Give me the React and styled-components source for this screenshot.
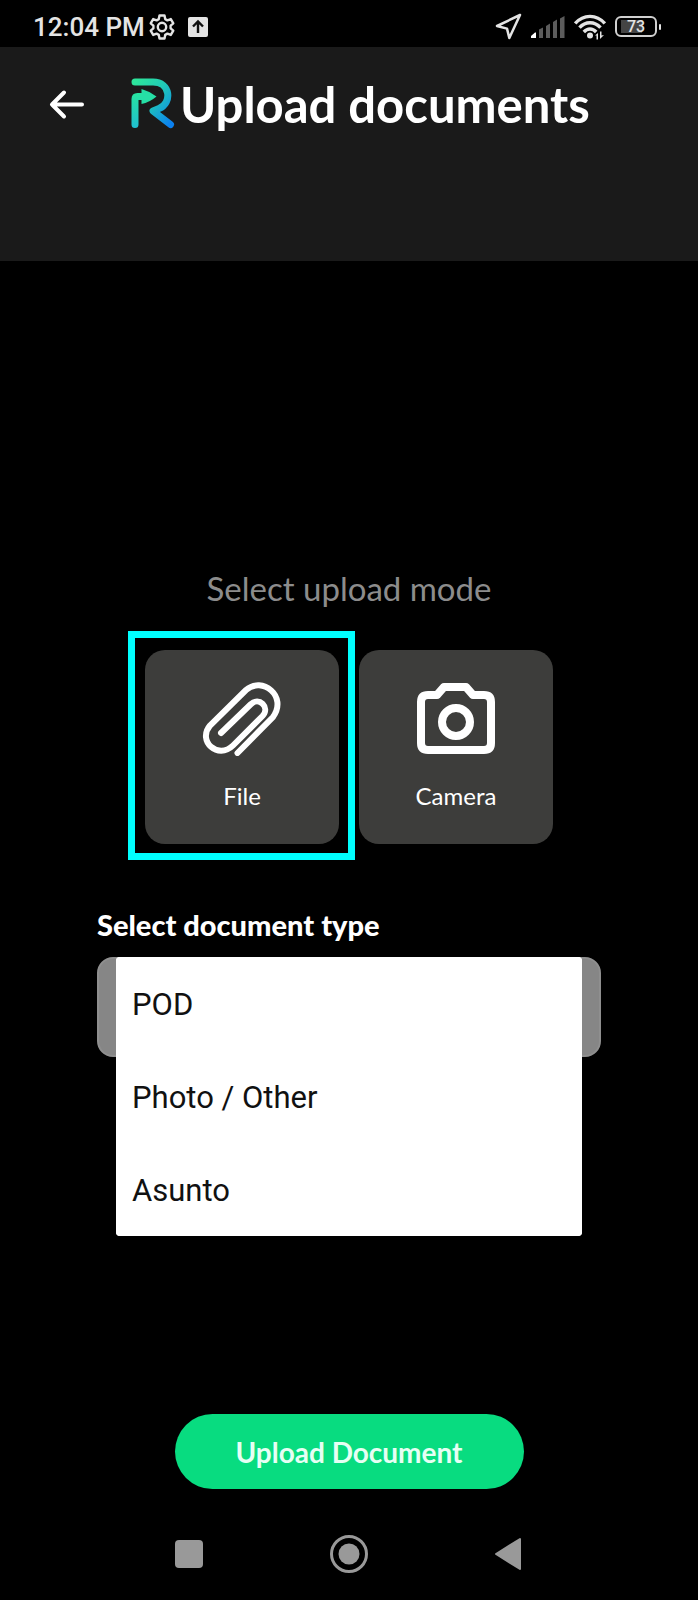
import React, { useState } from 'react'
import styled, { createGlobalStyle } from 'styled-components'

const GlobalStyle = createGlobalStyle`
  * {
    box-sizing: border-box;
  }

  body {
    background: #000;
    margin: 0;
  }

  button,
  select {
    border: 0;
    cursor: pointer;
    font: inherit;
    margin: 0;
    padding: 0;
  }
`

const Screen = styled.div`
  background: #000;
  color: #fff;
  display: flex;
  flex-direction: column;
  font-family: Lato, 'Open Sans', sans-serif;
  min-height: 100vh;
`

const StatusBar = styled.div`
  align-items: center;
  color: #e4e4e4;
  display: flex;
  font-family: Roboto, sans-serif;
  font-size: 26px;
  font-weight: 500;
  height: 47px;
  justify-content: space-between;
  line-height: 32px;
  padding: 6px 37px 0 33px;
`

const StatusGroup = styled.div`
  align-items: center;
  display: flex;
  gap: ${({ gap }) => gap}px;
`

const Header = styled.header`
  align-items: flex-start;
  background: #1a1a1a;
  display: flex;
  height: 214px;
  padding: 28px 48px 0;
`

const BackButton = styled.button`
  background: none;
  height: 60px;
  margin-right: 45px;
  width: 38px;
`

const Title = styled.h1`
  align-items: center;
  display: flex;
  font-size: 49px;
  font-weight: 700;
  gap: 5px;
  line-height: 58px;
  margin: 0;
  white-space: nowrap;
`

const Main = styled.main`
  display: flex;
  flex: 1;
  flex-direction: column;
  padding: 307px 97px 0;
`

const Hint = styled.p`
  color: #8c8c8c;
  font-size: 33px;
  line-height: 40px;
  margin: 0;
  text-align: center;
`

const Modes = styled.div`
  display: flex;
  gap: 20px;
  justify-content: center;
  margin-top: 42px;
`

const ModeButton = styled.button`
  align-items: center;
  background: #3d3d3b;
  border-radius: 20px;
  color: #fff;
  display: flex;
  flex-direction: column;
  font-size: 24px;
  gap: 24px;
  height: 194px;
  line-height: 32px;
  padding-top: 30px;
  position: relative;
  width: 194px;
`

const Highlight = styled.span`
  border: 7px solid #00ffff;
  inset: -19px -16px -16px -17px;
  pointer-events: none;
  position: absolute;
`

const Label = styled.label`
  font-size: 29px;
  font-weight: 900;
  line-height: 32px;
  margin-top: 65px;
`

const SelectField = styled.div`
  margin-top: 16px;
  position: relative;
`

const Select = styled.select`
  appearance: none;
  background: #868686;
  border: 2px solid #8f8f8f;
  border-radius: 16px;
  color: #868686;
  display: block;
  height: 100px;
  padding: 0 36px;
  width: 100%;
`

const Menu = styled.div`
  background: #fff;
  border-radius: 4px;
  left: 19px;
  overflow: hidden;
  position: absolute;
  right: 19px;
  top: 0;
`

const MenuItem = styled.button`
  background: #fff;
  color: #111;
  display: block;
  font-family: Roboto, sans-serif;
  font-size: 31px;
  height: 93px;
  line-height: 36px;
  padding: 3px 16px 0;
  text-align: left;
  width: 100%;
`

const Footer = styled.footer`
  display: flex;
  flex-direction: column;
`

const SubmitButton = styled.button`
  align-self: center;
  background: #08dc80;
  border-radius: 38px;
  color: #e6fff4;
  font-size: 28px;
  font-weight: 700;
  height: 75px;
  line-height: 32px;
  width: 50%;
`

const NavBar = styled.nav`
  display: grid;
  grid-template-columns: repeat(3, 160px);
  height: 111px;
  justify-content: center;
  padding-bottom: 26px;
  padding-top: 45px;
`

const NavButton = styled.button`
  align-items: center;
  background: none;
  display: flex;
  justify-content: center;
`

const GearIcon = () => (
  <svg width="26" height="26" viewBox="0 0 26 26" fill="none" stroke="#e4e4e4" strokeWidth="2.4" strokeLinejoin="round">
    <path d="M10.5 1.5h5l.7 3.6 2.2 1.3 3.4-1.3 2.5 4.3-2.7 2.3v2.6l2.7 2.3-2.5 4.3-3.4-1.3-2.2 1.3-.7 3.6h-5l-.7-3.6-2.2-1.3-3.4 1.3-2.5-4.3 2.7-2.3v-2.6L1.7 9.4l2.5-4.3 3.4 1.3 2.2-1.3z" />
    <circle cx="13" cy="13" r="4.2" />
  </svg>
)

const UploadBadge = () => (
  <svg width="20" height="20" viewBox="0 0 20 20">
    <rect width="20" height="20" rx="2" fill="#e4e4e4" />
    <path d="M10 16V5M5 9.5l5-5 5 5" fill="none" stroke="#111" strokeWidth="2.4" />
  </svg>
)

const LocationIcon = () => (
  <svg width="27" height="27" viewBox="0 0 27 27" fill="none" stroke="#e4e4e4" strokeWidth="2.5" strokeLinejoin="round">
    <path d="M25 2 2 13l10 2.6L14.3 25z" />
  </svg>
)

const SignalIcon = () => (
  <svg width="34" height="22" viewBox="0 0 34 22">
    <path d="M0 22v-2l4-3.5h1V22z" fill="#fff" />
    <path d="M8 13.5l4-2V22H8zM15 10l4-2.5V22h-4zM22 6l4-2.5V22h-4zM29 2.5 33.5 0v22H29z" fill="#5c5c5c" />
  </svg>
)

const WifiIcon = () => (
  <svg width="32" height="26" viewBox="0 0 32 26">
    <g fill="none" stroke="#e4e4e4" strokeWidth="3.4">
      <path d="M1.2 9.5C9.5 0 22.5 0 30.8 9.5" />
      <path d="M5.5 13.7c6-6.6 15-6.6 21 0" />
      <path d="M9.8 18c3.8-4 8.6-4 12.4 0" />
    </g>
    <circle cx="16" cy="21.5" r="3" fill="#e4e4e4" />
    <path d="M21 21.5l3-2.500v6.500h-1.500v-4zM26 17.500h1.500v4l2.500-.5-4 4z" fill="#e4e4e4" />
  </svg>
)

const Battery = styled.span`
  align-items: center;
  display: flex;
  gap: 2px;

  &::after {
    background: #e4e4e4;
    border-radius: 1px;
    content: '';
    height: 6px;
    width: 2px;
  }
`

const BatteryLevel = styled.span`
  background: linear-gradient(90deg, #444 70%, #000 70%) content-box;
  border: 2px solid #d0d0d0;
  border-radius: 6px;
  font-size: 16px;
  height: 21px;
  line-height: 13px;
  padding: 2px 4px;
  text-align: center;
  width: 42px;
`

const BackIcon = () => (
  <svg width="38" height="60" viewBox="0 0 38 60" fill="none" stroke="#fff" strokeWidth="4" strokeLinecap="round" strokeLinejoin="round">
    <path d="M34 29.500H4M16 17.500 4 29.500l12 12" />
  </svg>
)

const Logo = () => (
  <svg width="44" height="52" viewBox="0 0 44 52">
    <defs>
      <linearGradient id="logo-leg" x1="0" y1="0" x2="1" y2="1">
        <stop offset="0" stopColor="#2de59b" />
        <stop offset="0.45" stopColor="#20c9b8" />
        <stop offset="1" stopColor="#0b80f0" />
      </linearGradient>
      <linearGradient id="logo-stem" x1="0" y1="16" x2="0" y2="50" gradientUnits="userSpaceOnUse">
        <stop offset="0" stopColor="#27e3a1" />
        <stop offset="1" stopColor="#20bfd0" />
      </linearGradient>
    </defs>
    <path
      d="M4 4H22C39.500 4 41.500 25 28 30.500L22 33 39.500 46.500"
      fill="none"
      stroke="url(#logo-leg)"
      strokeWidth="7"
      strokeLinecap="round"
      strokeLinejoin="round"
    />
    <path d="M4 46.500V21q0-2.500 2.500-2.500H13" fill="none" stroke="url(#logo-stem)" strokeWidth="7" strokeLinecap="round" />
    <path d="M10.500 11Q18 13 25.500 18.500q-7 6-15 7.500z" fill="#26dfa5" />
  </svg>
)

const ClipIcon = () => (
  <svg width="80" height="76" viewBox="0 0 80 76" fill="none" stroke="#fff" strokeWidth="6" strokeLinecap="round">
    <path d="M19 53 48.500 24.500c8.500-8.500 20 3 12 11.500L31 65.500C16 80-5 61 8 45.500L44 10C60-4 86 16 71 37L35.500 73" />
  </svg>
)

const CameraIcon = () => (
  <svg width="80" height="76" viewBox="0 0 80 76" fill="none" stroke="#fff" strokeWidth="8" strokeLinejoin="round">
    <path d="M28 7h22l7 8h11q7 0 7 7v41q0 7-7 7H12q-7 0-7-7V22q0-7 7-7h9z" />
    <circle cx="40" cy="42" r="14" />
  </svg>
)

const modes = [
  { id: 'file', label: 'File', icon: <ClipIcon /> },
  { id: 'camera', label: 'Camera', icon: <CameraIcon /> },
]

const documentTypes = ['POD', 'Photo / Other', 'Asunto']

const App = () => {
  const [mode, setMode] = useState('file')
  const [type, setType] = useState('POD')
  const [open, setOpen] = useState(true)

  const pickType = value => {
    setType(value)
    setOpen(false)
  }

  return (
    <Screen>
      <GlobalStyle />
      <StatusBar>
        <StatusGroup gap={13}>
          <StatusGroup gap={4}>
            <span>12:04 PM</span>
            <GearIcon />
          </StatusGroup>
          <UploadBadge />
        </StatusGroup>
        <StatusGroup gap={9}>
          <LocationIcon />
          <SignalIcon />
          <WifiIcon />
          <Battery>
            <BatteryLevel>73</BatteryLevel>
          </Battery>
        </StatusGroup>
      </StatusBar>

      <Header>
        <BackButton type="button" aria-label="Back">
          <BackIcon />
        </BackButton>
        <Title>
          <Logo />
          Upload documents
        </Title>
      </Header>

      <Main>
        <Hint>Select upload mode</Hint>
        <Modes>
          {modes.map(({ id, label, icon }) => (
            <ModeButton key={id} type="button" aria-pressed={mode === id} onClick={() => setMode(id)}>
              {icon}
              {label}
              {mode === id ? <Highlight /> : null}
            </ModeButton>
          ))}
        </Modes>

        <Label htmlFor="document-type">Select document type</Label>
        <SelectField>
          <Select id="document-type" value={type} onChange={e => pickType(e.target.value)}>
            {documentTypes.map(name => (
              <option key={name}>{name}</option>
            ))}
          </Select>
          {open ? (
            <Menu role="listbox" aria-label="Document types">
              {documentTypes.map(name => (
                <MenuItem key={name} type="button" role="option" aria-selected={type === name} onClick={() => pickType(name)}>
                  {name}
                </MenuItem>
              ))}
            </Menu>
          ) : null}
        </SelectField>
      </Main>

      <Footer>
        <SubmitButton type="button">Upload Document</SubmitButton>
        <NavBar>
          <NavButton type="button" aria-label="Recent apps">
            <svg width="28" height="28" viewBox="0 0 28 28">
              <rect width="28" height="28" rx="4" fill="#999" />
            </svg>
          </NavButton>
          <NavButton type="button" aria-label="Home">
            <svg width="38" height="38" viewBox="0 0 38 38">
              <circle cx="19" cy="19" r="17.5" fill="none" stroke="#999" strokeWidth="3" />
              <circle cx="19" cy="19" r="10.5" fill="#999" />
            </svg>
          </NavButton>
          <NavButton type="button" aria-label="Back to previous app">
            <svg width="28" height="34" viewBox="0 0 28 34">
              <path d="M1 17 25 2v30z" fill="#999" stroke="#999" strokeWidth="2" strokeLinejoin="round" />
            </svg>
          </NavButton>
        </NavBar>
      </Footer>
    </Screen>
  )
}

export default App
